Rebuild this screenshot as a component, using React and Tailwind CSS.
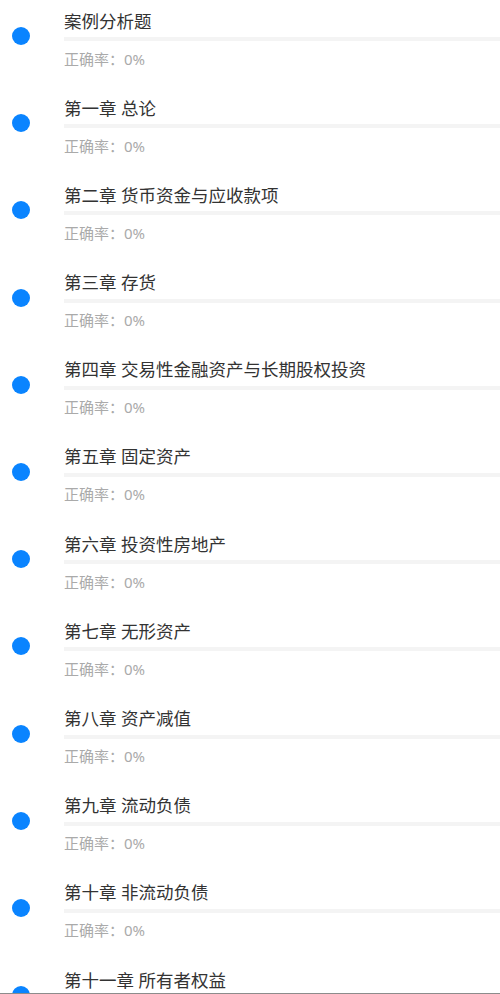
import React from 'react';

const chapters = [
    '案例分析题',
    '第一章 总论',
    '第二章 货币资金与应收款项',
    '第三章 存货',
    '第四章 交易性金融资产与长期股权投资',
    '第五章 固定资产',
    '第六章 投资性房地产',
    '第七章 无形资产',
    '第八章 资产减值',
    '第九章 流动负债',
    '第十章 非流动负债',
    '第十一章 所有者权益',
];

const ChapterRow = ({ title }) => (
    <div className="relative h-[87.2px] pl-[64px]">
        {/* dot */}
        <div className="absolute left-[12px] top-[27px] w-[18px] h-[18px] rounded-full bg-[#0a84ff]" />
        <div className="pt-[8.5px] text-[17.5px] leading-[24px] text-[#333333]">{title}</div>
        <div className="mt-[4.5px] h-[4px] bg-[#f4f4f4]" />
        <div className="mt-[7.5px] text-[15px] leading-[20px] text-[#aaaaaa]">正确率：0%</div>
    </div>
);

export default function App() {
    return (
        <div
            className="h-[994px] overflow-hidden bg-white relative"
            style={{ fontFamily: '"Noto Sans", "Noto Sans CJK SC", sans-serif' }}
        >
            {chapters.map((c) => (
                <ChapterRow key={c} title={c} />
            ))}
            <div className="absolute left-0 right-0 bottom-0 h-px bg-[#8c8c8c]" />
        </div>
    );
}
